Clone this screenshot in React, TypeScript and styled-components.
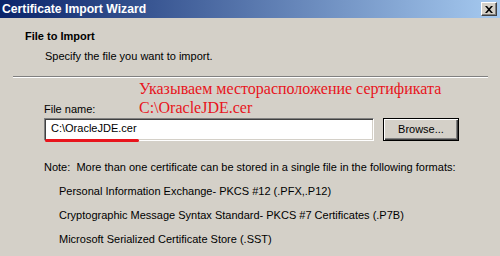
import React from "react";
import styled, { createGlobalStyle } from "styled-components";

const GlobalStyle = createGlobalStyle`
  html, body { margin: 0; padding: 0; background: #d4d0c8; }
  body { font-family: "Liberation Sans", Arial, sans-serif; font-size: 11px; color: #000; }
`;

const Window = styled.div`
  width: 500px;
  height: 256px;
  background: #d4d0c8;
  overflow: hidden;
  display: flex;
  flex-direction: column;
`;

const TitleBar = styled.div`
  height: 18px;
  flex: none;
  display: flex;
  align-items: center;
  justify-content: space-between;
  padding: 0 3px 0 2px;
  background: linear-gradient(to right, #0a246a 0%, #a6caf0 100%);
`;

const Title = styled.span`
  color: #fff;
  font-family: "Liberation Sans", Arial, sans-serif;
  font-weight: bold;
  font-size: 12.2px;
  line-height: 14px;
`;

const CloseButton = styled.div`
  width: 16px;
  height: 14px;
  box-sizing: border-box;
  background: #d4d0c8;
  border-top: 1px solid #fff;
  border-left: 1px solid #fff;
  border-right: 1px solid #404040;
  border-bottom: 1px solid #404040;
  box-shadow: inset -1px -1px 0 #808080;
  display: flex;
  align-items: center;
  justify-content: center;
`;

const Header = styled.div`
  padding: 12px 0 0 25px;
  height: 46px;
  box-sizing: border-box;
`;

const HeaderTitle = styled.div`
  font-weight: bold;
  font-size: 11px;
  line-height: 13px;
`;

const HeaderSub = styled.div`
  margin: 7px 0 0 20px;
  line-height: 13px;
`;

const Separator = styled.div`
  margin: 12px 0 0 13px;
  width: 475px;
  border-top: 1px solid #808080;
  border-bottom: 1px solid #fff;
`;

const Body = styled.div`
  padding: 1px 0 0 44px;
`;

const LabelRow = styled.div`
  display: flex;
  align-items: flex-end;
`;

const Label = styled.div`
  width: 95px;
  line-height: 13px;
  padding-bottom: 1px;
`;

const Annotation = styled.div`
  color: #e8141c;
  font-family: "Liberation Serif", "Times New Roman", serif;
  font-size: 16px;
  line-height: 19px;
`;

const InputRow = styled.div`
  display: flex;
  align-items: center;
  gap: 9px;
  margin-top: 1px;
`;

const InputWrap = styled.div`
  position: relative;
`;

const TextInput = styled.div`
  width: 330px;
  height: 23px;
  box-sizing: border-box;
  background: #fff;
  border-top: 1px solid #808080;
  border-left: 1px solid #808080;
  border-right: 1px solid #fff;
  border-bottom: 1px solid #fff;
  box-shadow: inset 1px 1px 0 #404040, inset -1px -1px 0 #d4d0c8;
  padding: 3px 0 0 6px;
  line-height: 13px;
`;

const Underline = styled.div`
  position: absolute;
  left: 1px;
  top: 21px;
  width: 94px;
  height: 3px;
  border-radius: 2px;
  background: #e8141c;
`;

const Button = styled.div`
  width: 76px;
  height: 23px;
  box-sizing: border-box;
  border: 1px solid #000;
  background: #d4d0c8;
  box-shadow: inset 1px 1px 0 #fff, inset -1px -1px 0 #404040, inset -2px -2px 0 #808080;
  display: flex;
  align-items: center;
  justify-content: center;
  line-height: 13px;
`;

const Note = styled.div`
  margin-top: 20px;
  line-height: 13px;
`;

const FormatList = styled.div`
  display: flex;
  flex-direction: column;
  gap: 11px;
  margin: 11px 0 0 15px;
`;

const FormatItem = styled.div`
  line-height: 13px;
`;

const formats = [
  "Personal Information Exchange- PKCS #12 (.PFX,.P12)",
  "Cryptographic Message Syntax Standard- PKCS #7 Certificates (.P7B)",
  "Microsoft Serialized Certificate Store (.SST)",
];

export default function App() {
  return (
    <>
      <GlobalStyle />
      <Window>
        <TitleBar>
          <Title>Certificate Import Wizard</Title>
          <CloseButton>
            <svg width="8" height="7" viewBox="0 0 8 7">
              <path d="M0 0h2l2 2.2L6 0h2L5 3.5 8 7H6L4 4.8 2 7H0l3-3.5z" fill="#000" />
            </svg>
          </CloseButton>
        </TitleBar>
        <Header>
          <HeaderTitle>File to Import</HeaderTitle>
          <HeaderSub>Specify the file you want to import.</HeaderSub>
        </Header>
        <Separator />
        <Body>
          <LabelRow>
            <Label>File name:</Label>
            <Annotation>
              Указываем месторасположение сертификата
              <br />
              C:\OracleJDE.cer
            </Annotation>
          </LabelRow>
          <InputRow>
            <InputWrap>
              <TextInput>C:\OracleJDE.cer</TextInput>
              <Underline />
            </InputWrap>
            <Button>Browse...</Button>
          </InputRow>
          <Note>Note:&nbsp; More than one certificate can be stored in a single file in the following formats:</Note>
          <FormatList>
            {formats.map((f) => (
              <FormatItem key={f}>{f}</FormatItem>
            ))}
          </FormatList>
        </Body>
      </Window>
    </>
  );
}
